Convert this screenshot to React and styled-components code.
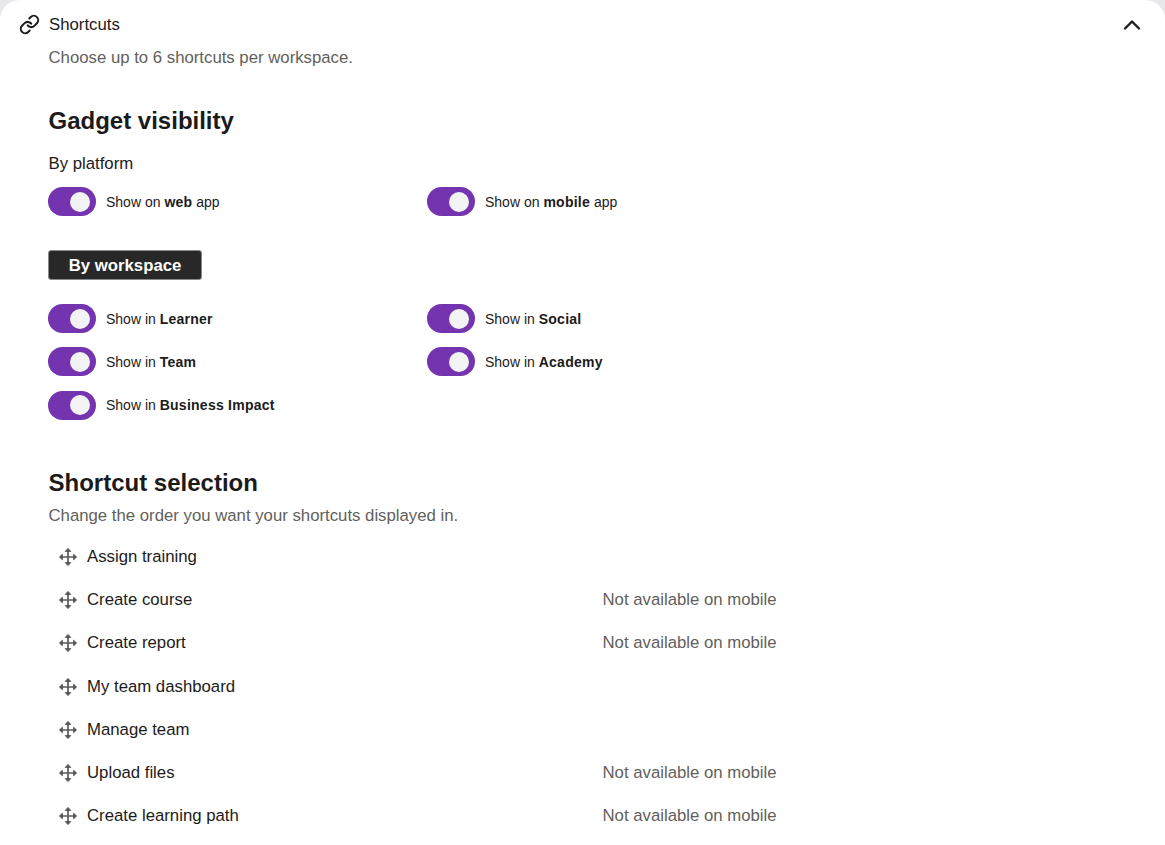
import styled, { createGlobalStyle } from "styled-components";
import { Link, ChevronUp } from "lucide-react";

const GlobalStyle = createGlobalStyle`
  html, body {
    margin: 0;
    padding: 0;
    background: #e9e9eb;
  }
  body {
    font-family: "Liberation Sans", Arial, sans-serif;
    color: #1c1b1a;
  }
`;

const Panel = styled.div`
  width: 1165px;
  height: 845px;
  overflow: hidden;
  box-sizing: border-box;
  background: #fff;
  border-radius: 20px 20px 0 0;
  padding: 15px 20px 0 20px;
`;

const Header = styled.div`
  display: flex;
  align-items: center;
  height: 20px;
`;

const HeaderIcon = styled(Link)`
  width: 21px;
  height: 21px;
  margin-left: -1px;
  margin-right: 9px;
  margin-top: -1px;
  color: #1c1b1a;
`;

const HeaderTitle = styled.span`
  flex: 1;
  font-size: 16.75px;
`;

const Chevron = styled(ChevronUp)`
  width: 28px;
  height: 28px;
  color: #1c1b1a;
  margin-right: -1px;
`;

const Body = styled.div`
  padding-left: 28.5px;
`;

const Muted = styled.p`
  margin: 0;
  font-size: 16.75px;
  line-height: 20px;
  color: #625f5c;
`;

const Hint = styled(Muted)`
  margin-top: 13px;
`;

const ChangeHint = styled(Muted)`
  margin-top: 9px;
`;

const SectionTitle = styled.h2`
  margin: 0;
  font-size: 24px;
  line-height: 28px;
  font-weight: 700;
  color: #1c1b1a;
`;

const VisibilityTitle = styled(SectionTitle)`
  margin-top: 39px;
`;

const SelectionTitle = styled(SectionTitle)`
  margin-top: 49.2px;
`;

const SubLabel = styled.div`
  margin-top: 19px;
  font-size: 16.75px;
  line-height: 20px;
`;

const ToggleGrid = styled.div`
  display: grid;
  grid-template-columns: 379px 379px;
  row-gap: 14.4px;
  margin-left: -0.5px;
  margin-top: ${(props) => props.$top}px;
`;

const ToggleItem = styled.label`
  display: flex;
  align-items: center;
  height: 29px;
  font-size: 14px;
  color: #1c1b1a;

  b {
    letter-spacing: 0.25px;
  }
`;

const Track = styled.span`
  display: flex;
  align-items: center;
  justify-content: flex-end;
  box-sizing: border-box;
  width: 48px;
  height: 29px;
  padding-right: 6.5px;
  margin-right: 10px;
  border-radius: 15px;
  background: #7434b0;
`;

const Thumb = styled.span`
  width: 20px;
  height: 20px;
  border-radius: 50%;
  background: #f3f3f4;
`;

const WorkspaceTag = styled.div`
  display: flex;
  align-items: center;
  justify-content: center;
  box-sizing: border-box;
  width: 154px;
  height: 30px;
  margin-top: 34px;
  margin-left: -0.5px;
  padding-top: 1px;
  border: 1px solid #8a8a8a;
  border-radius: 3px;
  background: #282828;
  color: #fff;
  font-size: 16.75px;
  font-weight: 700;
`;

const ShortcutList = styled.div`
  display: flex;
  flex-direction: column;
  margin-top: 9.6px;
  margin-left: -0.5px;
`;

const ShortcutRow = styled.div`
  display: grid;
  grid-template-columns: 554.5px 1fr;
  align-items: center;
  height: 43.17px;
  font-size: 16.75px;
`;

const ShortcutName = styled.div`
  display: flex;
  align-items: center;
  gap: 9.5px;
  padding-left: 9.5px;
`;

const DragSvg = styled.svg`
  width: 20px;
  height: 20px;
  flex: none;
`;

const DragIcon = () => (
  <DragSvg viewBox="0 0 20 20">
    <path d="M10 3v14M3 10h14" stroke="#5c5a58" strokeWidth="1.7" fill="none" />
    <path
      d="M7.2 4.4 10 1.4l2.8 3zM7.2 15.6l2.8 3 2.8-3zM4.4 7.2 1.4 10l3 2.8zM15.6 7.2l3 2.8-3 2.8z"
      fill="#5c5a58"
      stroke="#4e4c4a"
      strokeWidth="0.8"
      strokeLinejoin="round"
    />
  </DragSvg>
);

const Toggle = ({ prefix, bold, suffix }) => (
  <ToggleItem>
    <Track>
      <Thumb />
    </Track>
    <span>
      {prefix} <b>{bold}</b>
      {suffix ? ` ${suffix}` : ""}
    </span>
  </ToggleItem>
);

const shortcuts = [
  { name: "Assign training" },
  { name: "Create course", note: "Not available on mobile" },
  { name: "Create report", note: "Not available on mobile" },
  { name: "My team dashboard" },
  { name: "Manage team" },
  { name: "Upload files", note: "Not available on mobile" },
  { name: "Create learning path", note: "Not available on mobile" },
];

export default function App() {
  return (
    <Panel>
      <GlobalStyle />
      <Header>
        <HeaderIcon strokeWidth={2.3} />
        <HeaderTitle>Shortcuts</HeaderTitle>
        <Chevron strokeWidth={2} />
      </Header>
      <Body>
        <Hint>Choose up to 6 shortcuts per workspace.</Hint>
        <VisibilityTitle>Gadget visibility</VisibilityTitle>
        <SubLabel>By platform</SubLabel>
        <ToggleGrid $top={13}>
          <Toggle prefix="Show on" bold="web" suffix="app" />
          <Toggle prefix="Show on" bold="mobile" suffix="app" />
        </ToggleGrid>
        <WorkspaceTag>By workspace</WorkspaceTag>
        <ToggleGrid $top={24}>
          <Toggle prefix="Show in" bold="Learner" />
          <Toggle prefix="Show in" bold="Social" />
          <Toggle prefix="Show in" bold="Team" />
          <Toggle prefix="Show in" bold="Academy" />
          <Toggle prefix="Show in" bold="Business Impact" />
        </ToggleGrid>
        <SelectionTitle>Shortcut selection</SelectionTitle>
        <ChangeHint>Change the order you want your shortcuts displayed in.</ChangeHint>
        <ShortcutList>
          {shortcuts.map((item) => (
            <ShortcutRow key={item.name}>
              <ShortcutName>
                <DragIcon />
                {item.name}
              </ShortcutName>
              {item.note && <Muted>{item.note}</Muted>}
            </ShortcutRow>
          ))}
        </ShortcutList>
      </Body>
    </Panel>
  );
}
